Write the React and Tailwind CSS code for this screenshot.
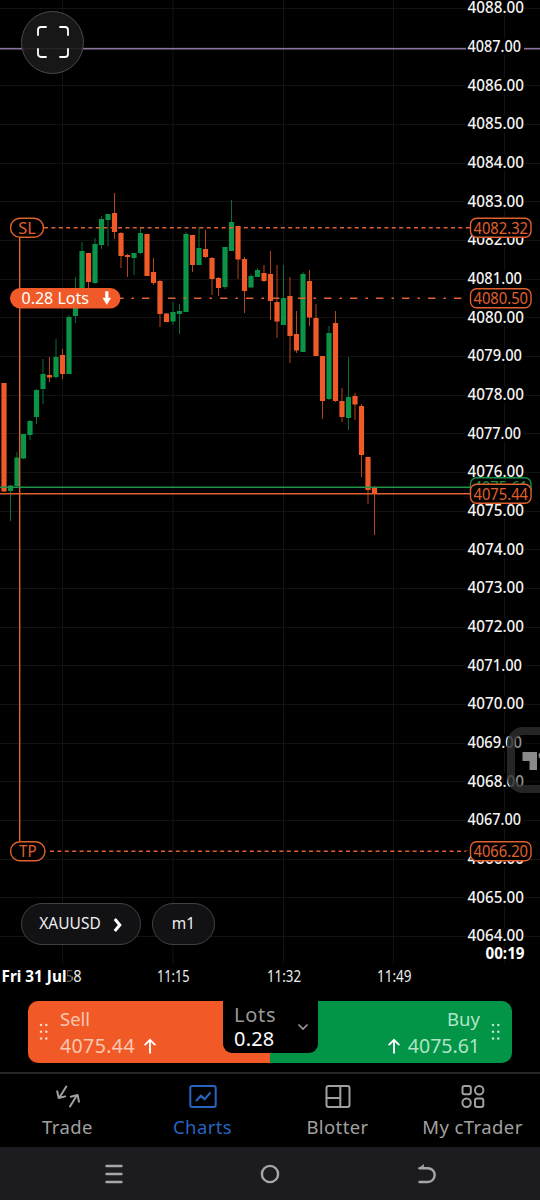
import {clsx} from 'clsx';

const UP = '#0b9347';
const DOWN = '#f05a28';
const LINE = '#e0602f';

// [high, top, bottom, low, direction], one entry per minute
const CANDLES = [
  [383, 383, 491.5, 491.5, 0],
  [485, 485.5, 491, 521, 1],
  [452, 457.5, 486, 487, 1],
  [434, 434, 458.5, 458.5, 1],
  [420, 421, 435, 440, 1],
  [389, 390, 417, 424, 1],
  [359, 374, 389, 404, 1],
  [357, 375, 377.5, 382, 0],
  [339, 357, 377, 379, 1],
  [349, 355, 374, 379, 0],
  [315, 317, 374, 374, 1],
  [277, 300, 316, 323, 1],
  [242, 251, 300, 300, 1],
  [253, 253, 282, 288, 0],
  [238, 244, 283, 284, 1],
  [216, 219, 245, 249, 1],
  [214, 214, 220, 246, 1],
  [193, 213, 232, 239, 0],
  [232, 233, 256, 268, 0],
  [254, 255, 257, 277, 0],
  [253, 253, 258, 275, 1],
  [227, 233, 253, 254, 1],
  [234, 234, 276, 276, 0],
  [258, 272, 283, 285, 0],
  [280, 281, 314, 327, 0],
  [313, 313.5, 322, 322, 0],
  [302, 312, 321.5, 325, 1],
  [304, 311, 314, 334, 1],
  [232, 234, 312, 312, 1],
  [235, 235, 265, 272, 0],
  [227, 248, 265, 265, 1],
  [230, 249, 257, 258, 0],
  [257, 258, 279, 295, 0],
  [277, 278, 288, 296, 0],
  [247, 247, 287, 289, 1],
  [200, 222, 251, 251, 1],
  [226, 226, 259.5, 279, 0],
  [257, 259, 291, 313, 0],
  [274, 276, 287.5, 287.5, 1],
  [268, 270, 277, 277, 1],
  [265, 273, 281, 282, 0],
  [251, 274, 301, 320, 0],
  [265, 302, 321.5, 338, 0],
  [265, 298, 325, 325, 1],
  [277, 296, 336, 363, 0],
  [311, 334, 350.5, 353, 0],
  [272, 274, 352, 352, 1],
  [270, 281, 317.5, 326, 0],
  [304, 318, 356, 356, 0],
  [356, 356, 401, 419, 0],
  [326, 333, 399, 400, 1],
  [311, 323, 401, 402, 0],
  [388, 401, 417, 422, 0],
  [357, 397, 418, 430, 1],
  [393, 396, 404.5, 420, 0],
  [404, 406, 455, 477, 0],
  [457, 457, 490, 504, 0],
  [486, 487, 494, 535, 0],
];

const PRICES = Array.from({length: 25}, (_, i) => 4088 - i);
const STEP = 38.67;
const GRID_X = [62.5, 173, 283.5, 393.5, 504.5];

const TIMES = [
  {label: ':58', x: 61, width: 20.5},
  {label: '11:15', x: 157, width: 32.5},
  {label: '11:32', x: 267, width: 34},
  {label: '11:49', x: 377, width: 34.5},
];

// narrow digits pull the label in a little
function priceWidth(price) {
  const last = price % 10;
  if (last === 7) return 53.5;
  if (last === 1 || last === 9) return 54.5;
  return 56.5;
}

function Label({width, children, ...props}) {
  return (
    <text textLength={width} lengthAdjust="spacingAndGlyphs" {...props}>
      {children}
    </text>
  );
}

function PriceTag({y, value, color = LINE}) {
  return (
    <g>
      <rect
        x="470.5"
        y={y - 9.5}
        width="60.5"
        height="19"
        rx="6"
        fill="#000"
        stroke={color}
        strokeWidth="1.4"
      />
      <Label x="473.5" y={y + 6} fontSize="16" width="54.5" fill={color}>
        {value}
      </Label>
    </g>
  );
}

function LevelBadge({y, width, label}) {
  return (
    <g>
      <rect
        x="10.5"
        y={y - 9.5}
        width={width}
        height="19"
        rx="9.5"
        fill="#000"
        stroke={LINE}
        strokeWidth="1.4"
      />
      <Label
        x={10.5 + width / 2}
        y={y + 6}
        fontSize="16"
        textAnchor="middle"
        width="17.5"
        fill={LINE}
      >
        {label}
      </Label>
    </g>
  );
}

function Chart() {
  return (
    <svg
      viewBox="0 0 540 1000"
      className="block h-[1000px] w-[540px]"
      fontFamily="'Noto Sans', sans-serif"
    >
      <g stroke="#131313" strokeWidth="1">
        {PRICES.map((price, i) => {
          const y = Math.round(8 + i * STEP) + 0.5;
          return <line key={price} x1="0" x2="540" y1={y} y2={y} />;
        })}
        {GRID_X.map((x) => (
          <line key={x} x1={x} x2={x} y1="0" y2="963" />
        ))}
      </g>

      <line x1="0" x2="540" y1="48.7" y2="48.7" stroke="#8c749f" strokeWidth="1.6" />

      {CANDLES.map(([high, top, bottom, low, up], i) => {
        const x = 4 + i * 6.5;
        const color = up ? UP : DOWN;
        return (
          <g key={i}>
            <line x1={x} x2={x} y1={high} y2={low} stroke={color} opacity="0.75" />
            <rect
              x={x - 2.6}
              y={top}
              width="5.2"
              height={bottom - top}
              rx="0.5"
              fill={color}
            />
          </g>
        );
      })}

      <line x1="19.7" x2="19.7" y1="237" y2="842" stroke={LINE} strokeWidth="1.4" />
      <g stroke={LINE} strokeWidth="1.5">
        <line x1="44" x2="470" y1="227.8" y2="227.8" strokeDasharray="4 3.4" />
        <line x1="50" x2="470" y1="851.2" y2="851.2" strokeDasharray="4 3.4" />
        <line
          x1="116"
          x2="465"
          y1="298.2"
          y2="298.2"
          strokeDasharray="7.5 8 2.5 8"
        />
      </g>
      <line x1="0" x2="470" y1="487.3" y2="487.3" stroke="#21934b" strokeWidth="1.5" />
      <line x1="0" x2="470" y1="493.7" y2="493.7" stroke={LINE} strokeWidth="1.6" />

      {PRICES.map((price, i) => (
        <g key={price}>
          <rect x="466" y={i * STEP} width="58" height="16" fill="#000" />
          <Label
            x="467.5"
            y={13.2 + i * STEP}
            fontSize="15.6"
            fontWeight="500"
            width={priceWidth(price)}
            fill="#f4f4f4"
          >
            {price}.00
          </Label>
        </g>
      ))}
      <Label x="485.5" y="959" fontSize="15.5" fontWeight="700" width="39" fill="#fff">
        00:19
      </Label>

      {TIMES.map(({label, x, width}) => (
        <Label key={label} x={x} y="982" fontSize="15.5" width={width} fill="#eee">
          {label}
        </Label>
      ))}
      <rect x="0" y="968" width="67" height="18" fill="#000" />
      <rect x="67" y="968" width="5" height="18" fill="#000" opacity="0.6" />
      <Label x="1.5" y="982" fontSize="15.3" fontWeight="700" width="65" fill="#fff">
        Fri 31 Jul
      </Label>

      <PriceTag y={227.8} value="4082.32" />
      <PriceTag y={298.2} value="4080.50" />
      <PriceTag y={487.3} value="4075.61" color="#129044" />
      <PriceTag y={493.8} value="4075.44" />
      <PriceTag y={851.2} value="4066.20" />

      <LevelBadge y={227.8} width={33} label="SL" />
      <LevelBadge y={851.2} width={34.5} label="TP" />

      <rect x="10" y="288" width="110.5" height="20.5" rx="10.25" fill={DOWN} />
      <Label x="21.5" y="304" fontSize="15.6" width="67.5" fill="#fff">
        0.28 Lots
      </Label>
      <path
        d="M105.4 291.5h2.8v6.5h2.6l-4 6.5-4-6.5h2.6z"
        fill="#fff"
        stroke="#fff"
        strokeWidth="0.4"
      />
    </svg>
  );
}

function FloatingLogo() {
  return (
    <svg
      viewBox="0 0 33 66"
      className="absolute top-[727px] right-0 h-[66px] w-[33px]"
    >
      <rect width="60" height="66" rx="16" fill="#000" opacity="0.4" />
      <rect
        x="4"
        y="4"
        width="58"
        height="58"
        rx="12"
        fill="none"
        stroke="#323232"
        strokeWidth="8"
        opacity="0.75"
      />
      <path d="M15.5 25h14.5v18h-7.5V34h-7z" fill="#898989" />
      <circle cx="35" cy="28.5" r="3.5" fill="#898989" />
    </svg>
  );
}

function Grip({className}) {
  return (
    <svg viewBox="0 0 10 18" className={clsx('h-[18px] w-[10px]', className)}>
      {[2, 8.7, 15.4].map((y) =>
        [2, 7.3].map((x) => (
          <circle key={`${x}-${y}`} cx={x} cy={y} r="1.25" fill="#fff" />
        )),
      )}
    </svg>
  );
}

function ArrowUp() {
  return (
    <svg
      viewBox="0 0 12 16"
      className="h-4 w-3 fill-none stroke-white stroke-[1.9]"
      strokeLinecap="round"
      strokeLinejoin="round"
    >
      <path d="M6 14.8V1.8M1.2 6.6 6 1.8l4.8 4.8" />
    </svg>
  );
}

function OrderBar() {
  return (
    <div className="relative mx-7 flex h-[62px] overflow-hidden rounded-[10px] text-[18.5px] leading-[27px]">
      <button className="flex w-1/2 items-center bg-[#f15a26] pl-[11px] text-left text-[#fbc7b3]">
        <Grip className="opacity-75" />
        <span className="ml-[11px] flex flex-col">
          <span>Sell</span>
          <span className="flex items-center gap-[9px] text-[19.5px] tracking-[0.4px]">
            4075.44
            <ArrowUp />
          </span>
        </span>
      </button>
      <button className="flex w-1/2 items-center justify-end bg-[#029447] pr-[11px] text-right text-[#b0e4c5]">
        <span className="mr-[11px] flex flex-col">
          <span>Buy</span>
          <span className="flex items-center gap-2 text-[19.5px]">
            <ArrowUp />
            4075.61
          </span>
        </span>
        <Grip className="opacity-75" />
      </button>
      <div className="absolute top-0 left-[195px] flex h-[52px] w-[94.5px] items-center justify-between rounded-b-[9px] bg-black pr-2.5 pl-[11px]">
        <div className="flex flex-col text-[20px] leading-6">
          <span className="tracking-[0.7px] text-[#999]">Lots</span>
          <span className="tracking-[0.2px] text-white">0.28</span>
        </div>
        <svg
          viewBox="0 0 10 6"
          className="h-1.5 w-2.5 fill-none stroke-[#999] stroke-[1.7]"
          strokeLinecap="round"
        >
          <path d="m1 1 4 4 4-4" />
        </svg>
      </div>
    </div>
  );
}

function TradeIcon() {
  return (
    <path d="M13.3 4.5 6.6 15.2M4.2 9.2l1.5 6.8 6.6-1.6M17 24.5l6.9-11.2M17.8 14.7l6.8-1.8 1.4 6.8" />
  );
}

function ChartsIcon() {
  return (
    <>
      <rect x="2.3" y="4" width="25.4" height="21" rx="2" />
      <path d="m8.5 18.5 4.5-5 3.5 3.8L22 11" />
    </>
  );
}

function BlotterIcon() {
  return (
    <>
      <rect x="3.5" y="4" width="23" height="21" rx="2" />
      <path d="M17.3 4v21M3.5 16h13.8" />
    </>
  );
}

function AppsIcon() {
  return (
    <>
      <rect x="4.5" y="4" width="8.3" height="8.3" rx="2" />
      <circle cx="21.2" cy="8.2" r="4.2" />
      <circle cx="8.6" cy="20.8" r="4.2" />
      <rect x="17" y="16.6" width="8.3" height="8.3" rx="2" />
    </>
  );
}

const TABS = [
  {label: 'Trade', Icon: TradeIcon},
  {label: 'Charts', Icon: ChartsIcon, active: true},
  {label: 'Blotter', Icon: BlotterIcon},
  {label: 'My cTrader', Icon: AppsIcon},
];

function TabBar() {
  return (
    <nav className="grid h-[75px] grid-cols-4 border-t-2 border-[#252527]">
      {TABS.map(({label, Icon, active}) => (
        <button
          key={label}
          className={clsx(
            'flex flex-col items-center pt-2 text-[18.5px] leading-[30px] tracking-[0.4px] whitespace-nowrap',
            active ? 'text-[#2863c0]' : 'text-[#a0a0a0]',
          )}
        >
          <svg
            viewBox="0 0 30 30"
            className="size-[30px] fill-none stroke-current stroke-2"
            strokeLinecap="round"
            strokeLinejoin="round"
          >
            <Icon />
          </svg>
          {label}
        </button>
      ))}
    </nav>
  );
}

function SystemBar() {
  return (
    <div className="flex h-[53px] items-center justify-between bg-[#1c1b20] px-[103px] text-[#a6a6a9]">
      <svg
        viewBox="0 0 22 22"
        className="size-[22px] fill-none stroke-current stroke-[2.4]"
        strokeLinecap="round"
      >
        <path d="M3.5 3h15M3.5 11h15M3.5 19h15" />
      </svg>
      <svg viewBox="0 0 22 22" className="size-[22px] fill-none stroke-current stroke-[2.4]">
        <circle cx="11" cy="11" r="8.1" />
      </svg>
      <svg
        viewBox="0 0 22 22"
        className="size-[22px] fill-none stroke-current stroke-[2.4]"
        strokeLinecap="round"
      >
        <path d="M4.5 5.2h8.3a6.9 6.9 0 0 1 0 13.8H4.5" />
        <path d="M3 5.8 8.8 1v5z" fill="currentColor" stroke="none" />
      </svg>
    </div>
  );
}

export default function App() {
  return (
    <div className="flex h-[1200px] w-[540px] flex-col overflow-hidden bg-black font-['Noto_Sans',sans-serif]">
      <main className="relative h-[1001px] shrink-0">
        <Chart />
        <button className="absolute top-[10.5px] left-[21px] flex size-[63px] items-center justify-center rounded-full border-[1.5px] border-[#4a4a4c] bg-[#19191b]/90">
          <svg
            viewBox="0 0 32 32"
            className="size-8 fill-none stroke-white stroke-[1.8]"
            strokeLinecap="round"
          >
            <path d="M1 9V4a3 3 0 0 1 3-3h5M23 1h5a3 3 0 0 1 3 3v5M31 23v5a3 3 0 0 1-3 3h-5M9 31H4a3 3 0 0 1-3-3v-5" />
          </svg>
        </button>
        <FloatingLogo />
        <div className="absolute top-[903px] left-[21px] flex gap-[11px] text-[15.5px] text-[#eee]">
          <button className="flex h-[42px] w-[120px] items-center justify-center gap-3 rounded-full border-[1.5px] border-[#414143] bg-[#141416]/90 pb-px">
            XAUUSD
            <svg
              viewBox="0 0 10 14"
              className="mt-0.5 h-3.5 w-2.5 fill-none stroke-white stroke-[3]"
            >
              <path d="m1.8 1 5 6-5 6" />
            </svg>
          </button>
          <button className="h-[42px] w-[63px] rounded-full border-[1.5px] border-[#414143] bg-[#141416]/90 pb-px">
            m1
          </button>
        </div>
      </main>
      <div className="h-[71px] shrink-0">
        <OrderBar />
      </div>
      <TabBar />
      <SystemBar />
    </div>
  );
}
